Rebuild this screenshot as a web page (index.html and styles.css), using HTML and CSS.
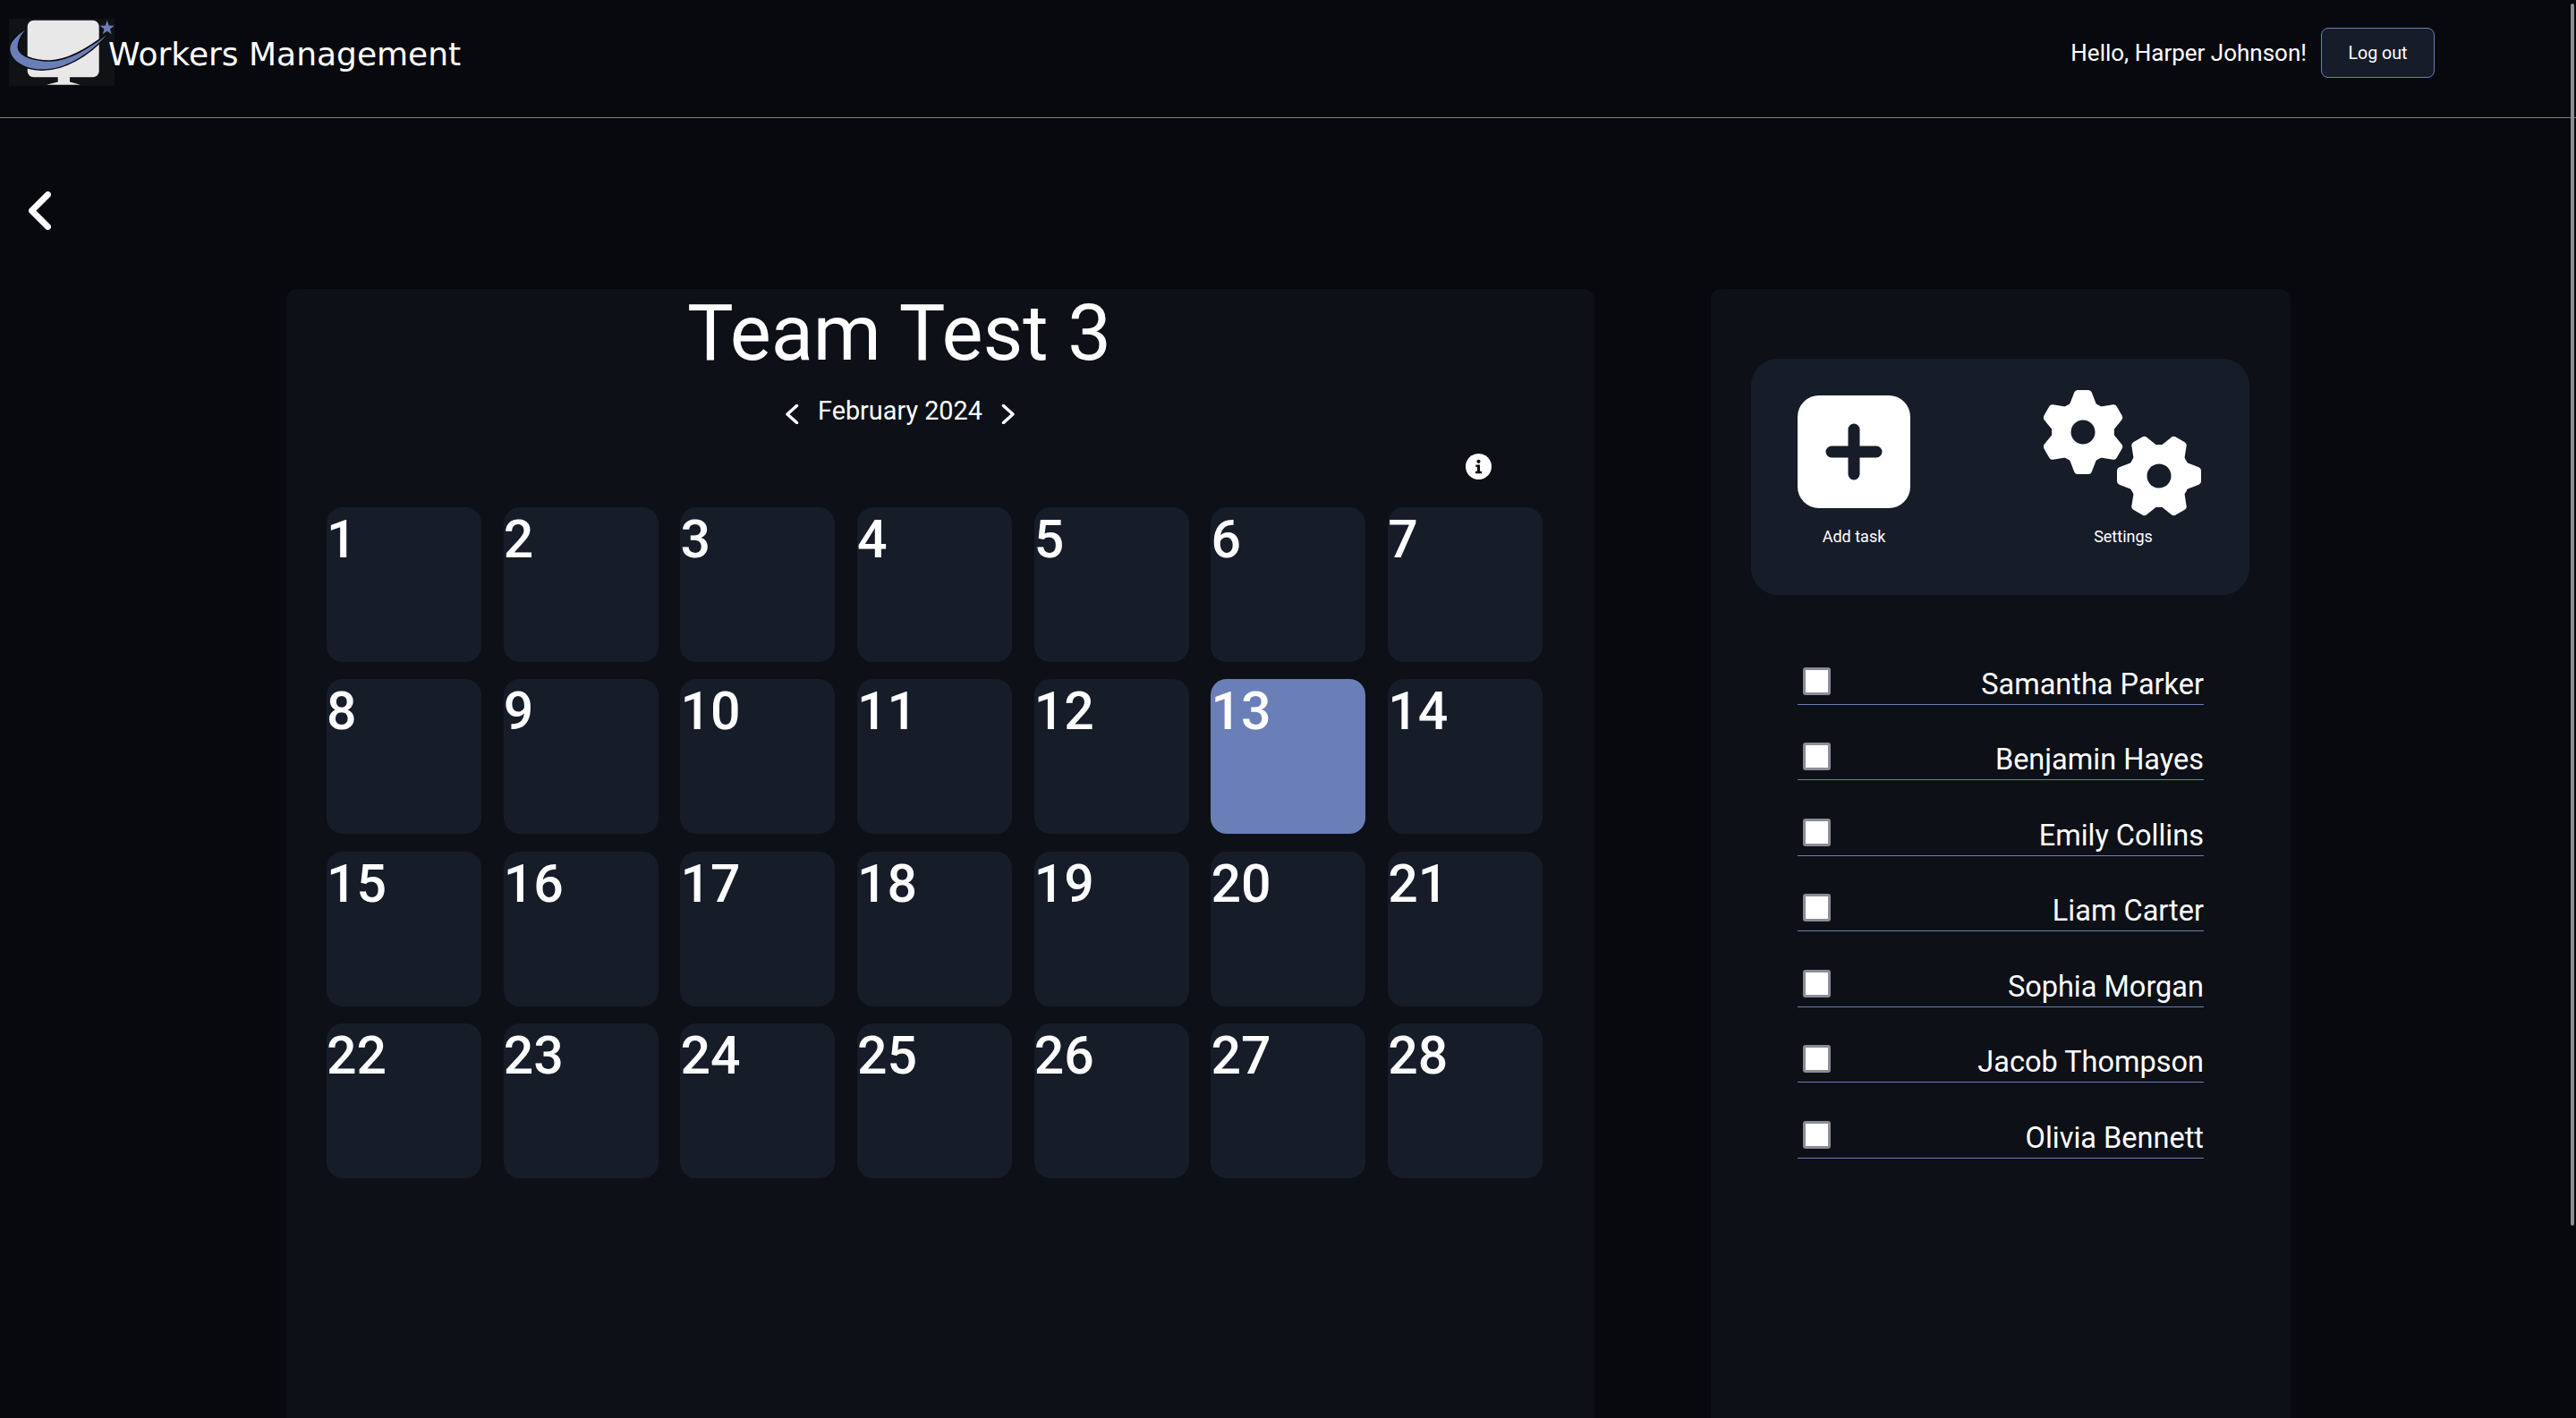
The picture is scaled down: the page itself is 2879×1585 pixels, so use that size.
FILE: index.html
```html
<!DOCTYPE html>
<html lang="en">
<head>
    <meta charset="UTF-8">
    <title>Workers Management</title>
    <link rel="stylesheet" href="styles.css">
</head>
<body>
    <header class="topbar">
        <a class="brand" href="#">
            <svg class="brand-logo" viewBox="0 0 118 75">
                <rect width="118" height="75" fill="#111216"/>
                <rect x="20.700" y="1.700" width="80" height="63.600" rx="7" fill="#e8e8e8"/>
                <path d="M54.700 65h13.300v5.500l12 3.200H42l12.700-3.200z" fill="#e8e8e8"/>
                <path d="M18.700 12C7 20 1 27 1.300 34 1.500 44 14 56 36 56.500 62 57 88 41 109.700 17.700 90 33 68 47 46 47.700 28 48 10 42 9.700 32 9.500 25 13 18 18.700 12z" fill="#6a7fb8" stroke="#0b0c10" stroke-width="3" paint-order="stroke"/>
                <path d="M109.700 1.800 111.700 7.500 117.800 7.700 112.900 11.400 114.700 17.200 109.700 13.700 104.700 17.200 106.500 11.400 101.600 7.700 107.700 7.500z" fill="#6a7fb8"/>
            </svg>
            <span class="brand-name">Workers Management</span>
        </a>
        <div class="user-box">
            <span class="hello">Hello, Harper Johnson!</span>
            <button class="logout" type="button">Log out</button>
        </div>
    </header>

    <div class="scroll-thumb"></div>

    <a class="back" href="#">
        <svg viewBox="0 0 25 43" width="25" height="43"><path d="M21.500 3.500 3.500 21.500l18 18" fill="none" stroke="#fff" stroke-width="7" stroke-linecap="round" stroke-linejoin="round"/></svg>
    </a>

    <main class="content">
        <section class="panel calendar">
            <div class="calendar-head">
                <h1>Team Test 3</h1>
                <div class="month-nav">
                    <svg viewBox="0 0 16 22" width="16" height="22"><path d="M13.500 1.500 3 11l10.500 9.500" fill="none" stroke="#fff" stroke-width="3.500" stroke-linecap="round" stroke-linejoin="round"/></svg>
                    <span>February 2024</span>
                    <svg viewBox="0 0 16 22" width="16" height="22"><path d="M2.500 1.500 13 11 2.500 20.500" fill="none" stroke="#fff" stroke-width="3.500" stroke-linecap="round" stroke-linejoin="round"/></svg>
                </div>
            </div>
            <div class="info-row">
                <svg viewBox="0 0 28 28" width="29" height="29">
                    <circle cx="14" cy="14" r="14" fill="#fff"/>
                    <circle cx="14" cy="8.500" r="2" fill="#0d1017"/>
                    <path d="M11 12h4.500v7H17.500v2.500h-7V19h2v-4.500H11z" fill="#0d1017"/>
                </svg>
            </div>
            <div class="days">
                <div class="day">1</div>
                <div class="day">2</div>
                <div class="day">3</div>
                <div class="day">4</div>
                <div class="day">5</div>
                <div class="day">6</div>
                <div class="day">7</div>
                <div class="day">8</div>
                <div class="day">9</div>
                <div class="day">10</div>
                <div class="day">11</div>
                <div class="day">12</div>
                <div class="day today">13</div>
                <div class="day">14</div>
                <div class="day">15</div>
                <div class="day">16</div>
                <div class="day">17</div>
                <div class="day">18</div>
                <div class="day">19</div>
                <div class="day">20</div>
                <div class="day">21</div>
                <div class="day">22</div>
                <div class="day">23</div>
                <div class="day">24</div>
                <div class="day">25</div>
                <div class="day">26</div>
                <div class="day">27</div>
                <div class="day">28</div>
            </div>
        </section>

        <aside class="panel side">
            <div class="actions">
                <a class="action action-add" href="#">
                    <svg viewBox="0 0 126 126" width="126" height="126">
                        <rect width="126" height="126" rx="24" fill="#fff"/>
                        <path d="M63 38v50M38 63h50" fill="none" stroke="#171c29" stroke-width="13" stroke-linecap="round"/>
                    </svg>
                    <span>Add task</span>
                </a>
                <a class="action action-settings" href="#">
                    <svg viewBox="0 0 178 142" width="178" height="142">
                        <defs>
                            <g id="tooth">
                                <path d="M-11 -30L-6 -43H6L11 -30z" fill="#fff" stroke="#fff" stroke-width="8" stroke-linejoin="round"/>
                            </g>
                            <g id="gear">
                                <circle r="35" fill="#fff"/>
                                <use href="#tooth"/>
                                <use href="#tooth" transform="rotate(60)"/>
                                <use href="#tooth" transform="rotate(120)"/>
                                <use href="#tooth" transform="rotate(180)"/>
                                <use href="#tooth" transform="rotate(240)"/>
                                <use href="#tooth" transform="rotate(300)"/>
                                <circle r="13.500" fill="#171c29"/>
                            </g>
                        </defs>
                        <use href="#gear" transform="translate(44 48)"/>
                        <use href="#gear" transform="translate(129 97) rotate(30)"/>
                    </svg>
                    <span>Settings</span>
                </a>
            </div>
            <ul class="workers">
                <li class="worker"><input type="checkbox"><span>Samantha Parker</span></li>
                <li class="worker"><input type="checkbox"><span>Benjamin Hayes</span></li>
                <li class="worker"><input type="checkbox"><span>Emily Collins</span></li>
                <li class="worker"><input type="checkbox"><span>Liam Carter</span></li>
                <li class="worker"><input type="checkbox"><span>Sophia Morgan</span></li>
                <li class="worker"><input type="checkbox"><span>Jacob Thompson</span></li>
                <li class="worker"><input type="checkbox"><span>Olivia Bennett</span></li>
            </ul>
        </aside>
    </main>
</body>
</html>
```

FILE: styles.css
```css
html{
    height: 100%;
}
body{
    margin: 0;
    height: 100vh;
    overflow: hidden;
    background: #07090e;
    color: #fff;
    font-family: Roboto, sans-serif;
}
a{
    color: inherit;
    text-decoration: none;
}
.topbar{
    height: 131px;
    border-bottom: 1px solid #6a7fb8;
    display: flex;
    justify-content: space-between;
    align-items: flex-start;
}
.brand{
    display: flex;
    align-items: center;
    margin: 21px 0 0 10px;
}
.brand-logo{
    width: 118px;
    height: 75px;
}
.brand-name{
    font-family: "DejaVu Sans", sans-serif;
    font-size: 36px;
    margin-left: -7px;
    margin-top: 4px;
}
.user-box{
    display: flex;
    align-items: center;
    gap: 16px;
    margin: 31px 158px 0 0;
}
.hello{
    font-size: 26px;
}
.logout{
    width: 127px;
    height: 56px;
    background: #171c29;
    border: 1px solid #6a7fb8;
    border-radius: 8px;
    color: #fff;
    font-family: Roboto, sans-serif;
    font-size: 19.600px;
}
.scroll-thumb{
    position: absolute;
    top: 4px;
    right: 2px;
    width: 4px;
    height: 1366px;
    background: #8a8c91;
    border-radius: 2px;
}
.back{
    display: block;
    width: 25px;
    height: 43px;
    margin: 82px 0 0 32px;
}
.content{
    display: flex;
    margin: 66px 0 0 320px;
    gap: 130px;
}
.panel{
    background: #0d1017;
    border-radius: 12px 12px 0 0;
    box-sizing: border-box;
    height: 1400px;
}
.calendar{
    width: 1462px;
    padding: 0 45px;
}
.calendar-head{
    width: 1280px;
    text-align: center;
}
h1{
    margin: 0;
    font-size: 86.800px;
    font-weight: 400;
    line-height: 99px;
}
.month-nav{
    display: flex;
    justify-content: center;
    align-items: center;
    gap: 21px;
    margin-top: 20px;
    padding-left: 2px;
    font-size: 28.800px;
}
.month-nav svg{
    margin-top: 7px;
}
.info-row{
    display: flex;
    justify-content: flex-end;
    padding-right: 70px;
    margin-top: 31px;
}
.days{
    display: grid;
    grid-template-columns: repeat(7, 173px);
    grid-auto-rows: 173px;
    column-gap: 24.700px;
    row-gap: 19.300px;
    margin-top: 31px;
}
.day{
    background: #171c29;
    border-radius: 18px;
    font-size: 59px;
    font-weight: 500;
    line-height: 69px;
    padding-top: 1px;
}
.today{
    background: #6a7fb8;
}
.side{
    width: 648px;
    padding: 78px 46px 0 45px;
}
.actions{
    height: 264px;
    background: #171c29;
    border-radius: 30px;
    display: flex;
    justify-content: space-between;
    padding: 34px 52px 0;
    box-sizing: border-box;
}
.action{
    display: flex;
    flex-direction: column;
    align-items: center;
    font-size: 18px;
}
.action svg{
    display: block;
}
.action-add svg{
    margin-top: 7px;
}
.action-add span{
    margin-top: 21px;
}
.action-settings span{
    margin-top: 12px;
}
.workers{
    list-style: none;
    margin: 38px 6px 0 7px;
    padding: 0 45px;
}
.worker{
    display: flex;
    justify-content: space-between;
    align-items: flex-end;
    height: 83.500px;
    border-bottom: 1px solid #6a7fb8;
    font-size: 32.500px;
}
.worker input{
    appearance: none;
    width: 31px;
    height: 31px;
    margin: 0 0 10px 6px;
    background: #fff;
    border: 3px solid #8b8c96;
    border-radius: 3px;
    box-sizing: border-box;
}
.worker span{
    line-height: 43px;
}
```
